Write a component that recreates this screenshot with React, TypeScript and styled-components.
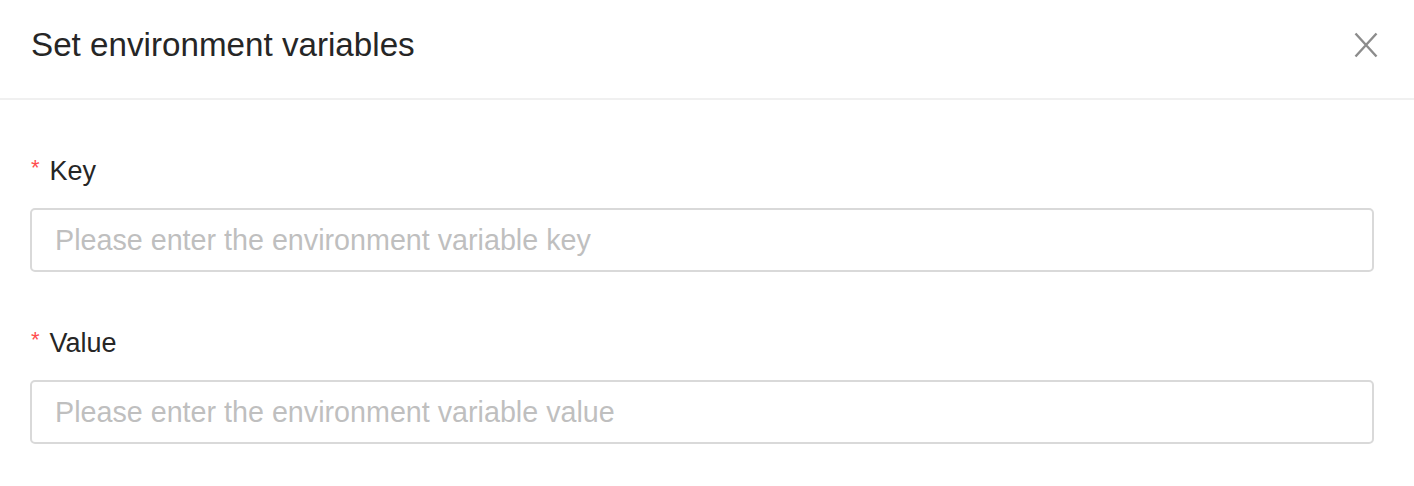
import styled, { createGlobalStyle } from 'styled-components';

const GlobalStyle = createGlobalStyle`
  html, body {
    margin: 0;
    padding: 0;
    background: #ffffff;
  }
  body {
    font-family: "Liberation Sans", Arial, sans-serif;
    color: #262626;
  }
`;

const Modal = styled.div`
  width: 1414px;
  height: 486px;
  background: #ffffff;
  overflow: hidden;
`;

const Header = styled.header`
  display: flex;
  align-items: center;
  justify-content: space-between;
  height: 100px;
  padding: 0 33px 0 31px;
  border-bottom: 2px solid #f0f0f0;
  box-sizing: border-box;
`;

const Title = styled.h2`
  margin: 0;
  font-size: 33.2px;
  font-weight: 400;
  color: #262626;
  line-height: 1;
  padding-bottom: 8px;
`;

const CloseButton = styled.button`
  display: flex;
  align-items: center;
  justify-content: center;
  width: 30px;
  height: 30px;
  padding: 0;
  border: none;
  background: transparent;
  cursor: pointer;
  margin-bottom: 8px;
`;

const Body = styled.div`
  display: flex;
  flex-direction: column;
  gap: 56px;
  padding: 56px 40px 0 30px;
`;

const Field = styled.div`
  display: flex;
  flex-direction: column;
  gap: 22px;
`;

const Label = styled.label`
  display: flex;
  align-items: center;
  gap: 10px;
  padding-left: 1px;
  font-size: 27px;
  line-height: 30px;
  color: #262626;
`;

const Required = styled.span`
  color: #ff4d4f;
  font-size: 22px;
  line-height: 1;
  margin-top: -6px;
`;

const Input = styled.input`
  box-sizing: border-box;
  width: 100%;
  height: 64px;
  padding: 0 23px;
  border: 2px solid #d9d9d9;
  border-radius: 5px;
  font-family: "Liberation Sans", Arial, sans-serif;
  font-size: 28.7px;
  color: #262626;
  background: #ffffff;
  outline: none;

  &::placeholder {
    color: #bfbfbf;
  }
`;

const fields = [
  { id: 'key', label: 'Key', placeholder: 'Please enter the environment variable key' },
  { id: 'value', label: 'Value', placeholder: 'Please enter the environment variable value' },
];

const App = () => {
  return (
    <>
      <GlobalStyle />
      <Modal>
        <Header>
          <Title>Set environment variables</Title>
          <CloseButton aria-label="Close">
            <svg width="24" height="26" viewBox="0 0 24 26" fill="none">
              <path d="M1.5 1.5 L22.5 24.5 M22.5 1.5 L1.5 24.5" stroke="#8c8c8c" strokeWidth="2.4" />
            </svg>
          </CloseButton>
        </Header>
        <Body>
          {fields.map((f) => (
            <Field key={f.id}>
              <Label htmlFor={f.id}>
                <Required>*</Required>
                {f.label}
              </Label>
              <Input id={f.id} placeholder={f.placeholder} />
            </Field>
          ))}
        </Body>
      </Modal>
    </>
  );
};

export default App;
